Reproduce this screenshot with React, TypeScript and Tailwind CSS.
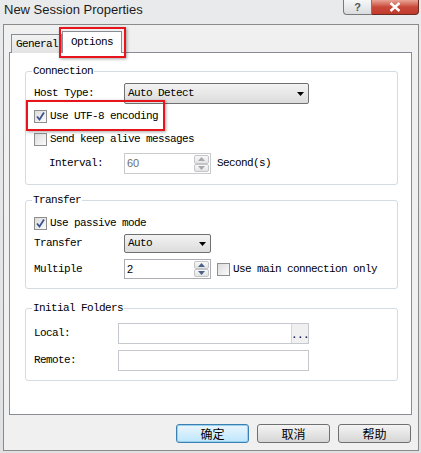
import React from "react";

const mono = "font-['Liberation_Mono',monospace] text-[11px] tracking-[-0.6px] text-black";

function Check({ checked }: { checked?: boolean }) {
  return (
    <span className="flex h-[13px] w-[13px] shrink-0 items-center justify-center border border-[#8e8f8f] bg-linear-to-br from-[#dcdcdc] to-[#fbfbfb]">
      {checked && (
        <svg width="11" height="11" viewBox="0 0 11 11">
          <path d="M2 5.5 L4.5 8.5 L9 1.5" fill="none" stroke="#3d5390" strokeWidth="1.8" />
        </svg>
      )}
    </span>
  );
}

function Select({ value, className }: { value: string; className: string }) {
  return (
    <div
      className={`flex items-center justify-between rounded-[2px] border border-[#707070] bg-linear-to-b from-[#f3f3f3] to-[#dcdcdc] pl-[3px] pr-[4px] ${className}`}
    >
      <span className={mono}>{value}</span>
      <svg width="7" height="4" viewBox="0 0 7 4">
        <path d="M0 0 H7 L3.5 4 Z" fill="#000" />
      </svg>
    </div>
  );
}

function SpinArrow({ up, color }: { up?: boolean; color: string }) {
  return (
    <span className="flex flex-1 items-center justify-center rounded-[2px] border border-[#c3c5c8] bg-linear-to-b from-[#f8f8f8] to-[#e4e4e4]">
      <svg width="7" height="4" viewBox="0 0 7 4">
        <path d={up ? "M0 4 L3.5 0 L7 4 Z" : "M0 0 H7 L3.5 4 Z"} fill={color} />
      </svg>
    </span>
  );
}

function Spin({ value, disabled, className }: { value: string; disabled?: boolean; className: string }) {
  return (
    <div className={`flex border bg-white ${disabled ? "border-[#c9cbcd]" : "border-[#abadb3]"} ${className}`}>
      <span
        className={`flex-1 pl-[2px] font-['Liberation_Sans',Arial,sans-serif] text-[11px] leading-[18px] ${
          disabled ? "text-[#6d6d6d]" : "text-black"
        }`}
      >
        {value}
      </span>
      <div className="flex w-[17px] flex-col p-px">
        <SpinArrow up color={disabled ? "#a8a8a8" : "#4b6189"} />
        <SpinArrow color={disabled ? "#a8a8a8" : "#4b6189"} />
      </div>
    </div>
  );
}

function Group({ title, children }: { title: string; children: React.ReactNode }) {
  return (
    <div className="relative ml-[15px] w-[373px] rounded-[3px] border border-[#d3dce3]">
      <span className={`absolute -top-[7px] left-[6px] bg-white px-px leading-[12px] ${mono}`}>{title}</span>
      {children}
    </div>
  );
}

function Button({ label, primary }: { label: string; primary?: boolean }) {
  return (
    <div
      className={`flex h-[19px] w-[73px] items-center justify-center rounded-[3px] border font-['Noto_Sans_CJK_SC',sans-serif] text-[12px] leading-none text-black ${
        primary
          ? "border-[#3c7fb1] bg-linear-to-b from-[#eaf6fd] to-[#bee6fd] shadow-[inset_0_0_0_1px_#98d1ef]"
          : "border-[#707070] bg-linear-to-b from-[#f4f4f4] to-[#d6d6d6]"
      }`}
    >
      {label}
    </div>
  );
}

export default function App() {
  return (
    <div className="relative h-[453px] w-[421px] overflow-hidden bg-linear-to-b from-[#e9eaeb] to-[#dfe1e3]">
      {/* title bar */}
      <div className="flex h-[24px] items-start">
        <span className="pl-[4px] pt-[2px] font-['Liberation_Sans',Arial,sans-serif] text-[13px] leading-[16px] text-[#1b1b1b]">
          New Session Properties
        </span>
        <div className="ml-auto mr-[2px] flex h-[15px]">
          <div className="flex w-[29px] items-center justify-center rounded-bl-[4px] border border-t-0 border-[#7a7a7a] bg-linear-to-b from-[#f7f7f7] to-[#d9dcdf] font-['Liberation_Sans',sans-serif] text-[11px] font-bold leading-none text-[#555]">
            ?
          </div>
          <div className="flex w-[47px] items-center justify-center rounded-br-[4px] border border-l-0 border-t-0 border-[#6b2a22] bg-linear-to-b from-[#e8a496] via-[#c9483a] to-[#c03a2c]">
            <svg width="12" height="10" viewBox="0 0 12 10">
              <path d="M1.5 1 L10.5 9 M10.5 1 L1.5 9" stroke="#fff" strokeWidth="2.4" />
            </svg>
          </div>
        </div>
      </div>

      {/* client area */}
      <div className="ml-[3px] h-[427px] w-[416px] border border-[#8a8a8a] bg-[#f0f0f0]">
        <div className="ml-[7px] mt-[6px] flex h-[22px] items-end">
          <div className={`h-[19px] w-[51px] shrink-0 whitespace-nowrap border border-b-0 border-[#898c95] bg-linear-to-b from-[#f3f3f3] to-[#e3e3e3] pl-[4px] leading-[19px] ${mono}`}>
            General
          </div>
          <div className={`relative z-10 h-[22px] w-[60px] border border-b-0 border-[#898c95] bg-white text-center leading-[20px] ${mono}`}>
            Options
          </div>
        </div>

        <div className="-mt-px ml-[5px] h-[363px] w-[403px] border border-[#898c95] bg-white pt-[18px]">
          <Group title="Connection">
            <div className="mt-[11px] flex h-[21px] items-center pl-[8px]">
              <span className={`w-[90px] ${mono}`}>Host Type:</span>
              <Select value="Auto Detect" className="h-[21px] w-[185px]" />
            </div>
            <div className="mt-[6px] flex h-[13px] items-center gap-[3px] pl-[8px]">
              <Check checked />
              <span className={mono}>Use UTF-8 encoding</span>
            </div>
            <div className="mt-[10px] flex h-[13px] items-center gap-[3px] pl-[8px]">
              <Check />
              <span className={mono}>Send keep alive messages</span>
            </div>
            <div className="mb-[10px] mt-[7px] flex h-[21px] items-center pl-[23px]">
              <span className={`w-[75px] ${mono}`}>Interval:</span>
              <Spin value="60" disabled className="h-[21px] w-[87px]" />
              <span className={`ml-[6px] ${mono}`}>Second(s)</span>
            </div>
          </Group>

          <div className="mt-[15px]">
            <Group title="Transfer">
              <div className="mt-[16px] flex h-[13px] items-center gap-[3px] pl-[8px]">
                <Check checked />
                <span className={mono}>Use passive mode</span>
              </div>
              <div className="mt-[4px] flex h-[19px] items-center pl-[8px]">
                <span className={`w-[90px] ${mono}`}>Transfer</span>
                <Select value="Auto" className="h-[19px] w-[87px]" />
              </div>
              <div className="mb-[9px] mt-[6px] flex h-[20px] items-center pl-[8px]">
                <span className={`w-[90px] ${mono}`}>Multiple</span>
                <Spin value="2" className="h-[20px] w-[87px]" />
                <span className="ml-[6px]">
                  <Check />
                </span>
                <span className={`ml-[3px] ${mono}`}>Use main connection only</span>
              </div>
            </Group>
          </div>

          <div className="mt-[19px]">
            <Group title="Initial Folders">
              <div className="mt-[14px] flex h-[21px] items-center pl-[8px]">
                <span className={`w-[84px] ${mono}`}>Local:</span>
                <div className="flex h-[21px] w-[191px] justify-end border border-[#c5c9ce] bg-white">
                  <span className={`flex w-[17px] items-end justify-center border-l border-[#d6d6d6] bg-[#f0f0f0] pb-[2px] leading-none ${mono}`}>
                    ...
                  </span>
                </div>
              </div>
              <div className="mb-[9px] mt-[6px] flex h-[21px] items-center pl-[8px]">
                <span className={`w-[84px] ${mono}`}>Remote:</span>
                <div className="h-[21px] w-[191px] border border-[#c5c9ce] bg-white" />
              </div>
            </Group>
          </div>
        </div>

        <div className="mt-[9px] flex justify-end gap-[8px] pr-[7px]">
          <Button label="确定" primary />
          <Button label="取消" />
          <Button label="帮助" />
        </div>
      </div>

      {/* red highlight boxes */}
      <div className="absolute left-[59px] top-[27px] h-[31px] w-[67px] border-2 border-[#e8141b] shadow-[1px_1px_3px_rgba(0,0,0,0.35)]" />
      <div className="absolute left-[26px] top-[100px] h-[31px] w-[139px] border-2 border-[#e8141b] shadow-[1px_1px_3px_rgba(0,0,0,0.35)]" />
    </div>
  );
}
